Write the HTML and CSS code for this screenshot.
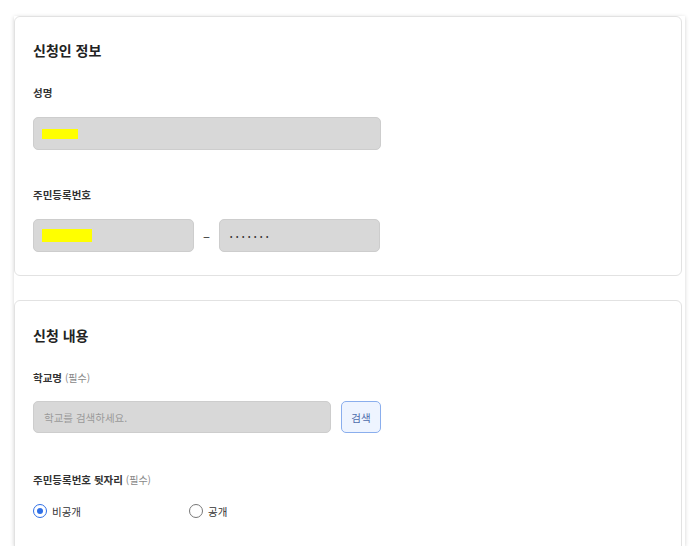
FILE: index.html
```html
<!DOCTYPE html>
<html lang="ko">
<head>
<meta charset="utf-8">
<link rel="stylesheet" href="styles.css">
</head>
<body>
<div class="wrap">
  <section class="card card-1">
    <h2 class="title">신청인 정보</h2>
    <div class="label lb-first">성명</div>
    <div class="field field-wide"><span class="mask mask-name"></span></div>
    <div class="label lb-gap">주민등록번호</div>
    <div class="id-row">
      <div class="field field-half"><span class="mask mask-id"></span></div>
      <span class="dash">–</span>
      <div class="field field-half"><span class="dots">•••••••</span></div>
    </div>
  </section>
  <section class="card card-2">
    <h2 class="title">신청 내용</h2>
    <div class="label lb-first">학교명 <span class="req">(필수)</span></div>
    <div class="search-row">
      <div class="field field-search"><span class="ph">학교를 검색하세요.</span></div>
      <button class="btn">검색</button>
    </div>
    <div class="label lb-gap2">주민등록번호 뒷자리 <span class="req">(필수)</span></div>
    <div class="radios">
      <label class="radio"><span class="circle on"></span><span class="rtext">비공개</span></label>
      <label class="radio"><span class="circle"></span><span class="rtext">공개</span></label>
    </div>
  </section>
</div>
</body>
</html>
```
FILE: styles.css
```css
* { box-sizing: border-box; }
html, body { margin: 0; padding: 0; background: #ffffff; }
body {
  font-family: "Noto Sans CJK KR", "Noto Sans", sans-serif;
  color: #222;
}
.wrap {
  margin: 16px 0 0 14px;
  width: 671px;
  height: 530px;
  overflow: hidden;
  background: #fff;
  box-shadow: 0 1px 4px rgba(0,0,0,0.18);
}
.card {
  width: 668px;
  border: 1px solid #e2e2e2;
  border-radius: 6px;
  padding: 0 18px;
}
.card-1 { padding-top: 23px; padding-bottom: 23px; }
.card-2 { margin-top: 24px; padding-top: 24px; padding-bottom: 40px; }
.title {
  margin: 0;
  font-size: 14px;
  line-height: 20px;
  font-weight: 700;
  color: #222;
}
.label {
  font-size: 10.5px;
  line-height: 16px;
  font-weight: 700;
  color: #333;
}
.lb-first { margin-top: 25px; }
.lb-gap { margin-top: 37px; }
.lb-gap2 { margin-top: 39px; }
.req { font-weight: 400; color: #888; font-size: 10px; }
.field {
  height: 33px;
  background: #d8d8d8;
  border: 1px solid #cdcdcd;
  border-radius: 5px;
  display: flex;
  align-items: center;
  padding: 0 8px;
}
.field-wide { width: 348px; margin-top: 16px; }
.id-row { display: flex; align-items: center; margin-top: 16px; }
.field-half { width: 161px; }
.dash { width: 25px; text-align: center; font-size: 13px; color: #333; }
.mask { display: block; background: #ffff00; }
.mask-name { width: 36px; height: 10px; }
.mask-id { width: 50px; height: 13px; }
.dots { font-size: 7px; letter-spacing: 3.6px; color: #333; padding-left: 2px; }
.search-row { display: flex; margin-top: 15px; gap: 10px; }
.field-search { width: 298px; height: 32px; padding-left: 10px; }
.ph { font-size: 10.5px; color: #9a9a9a; }
.btn {
  width: 40px;
  height: 32px;
  background: #eef4ff;
  border: 1px solid #8aaeed;
  border-radius: 5px;
  color: #4d6cab;
  font-family: inherit;
  font-size: 10.5px;
  padding: 0;
}
.radios { display: flex; margin-top: 15px; }
.radio { display: flex; align-items: center; height: 16px; }
.radio:first-child { width: 156px; }
.circle {
  width: 14px; height: 14px;
  border-radius: 50%;
  border: 1px solid #777;
  display: flex; align-items: center; justify-content: center;
}
.circle.on { border: 1.5px solid #2f6fe6; }
.circle.on::after {
  content: "";
  width: 6px; height: 6px; border-radius: 50%;
  background: #2f6fe6;
}
.rtext { margin-left: 5px; font-size: 10.5px; color: #333; }
```
